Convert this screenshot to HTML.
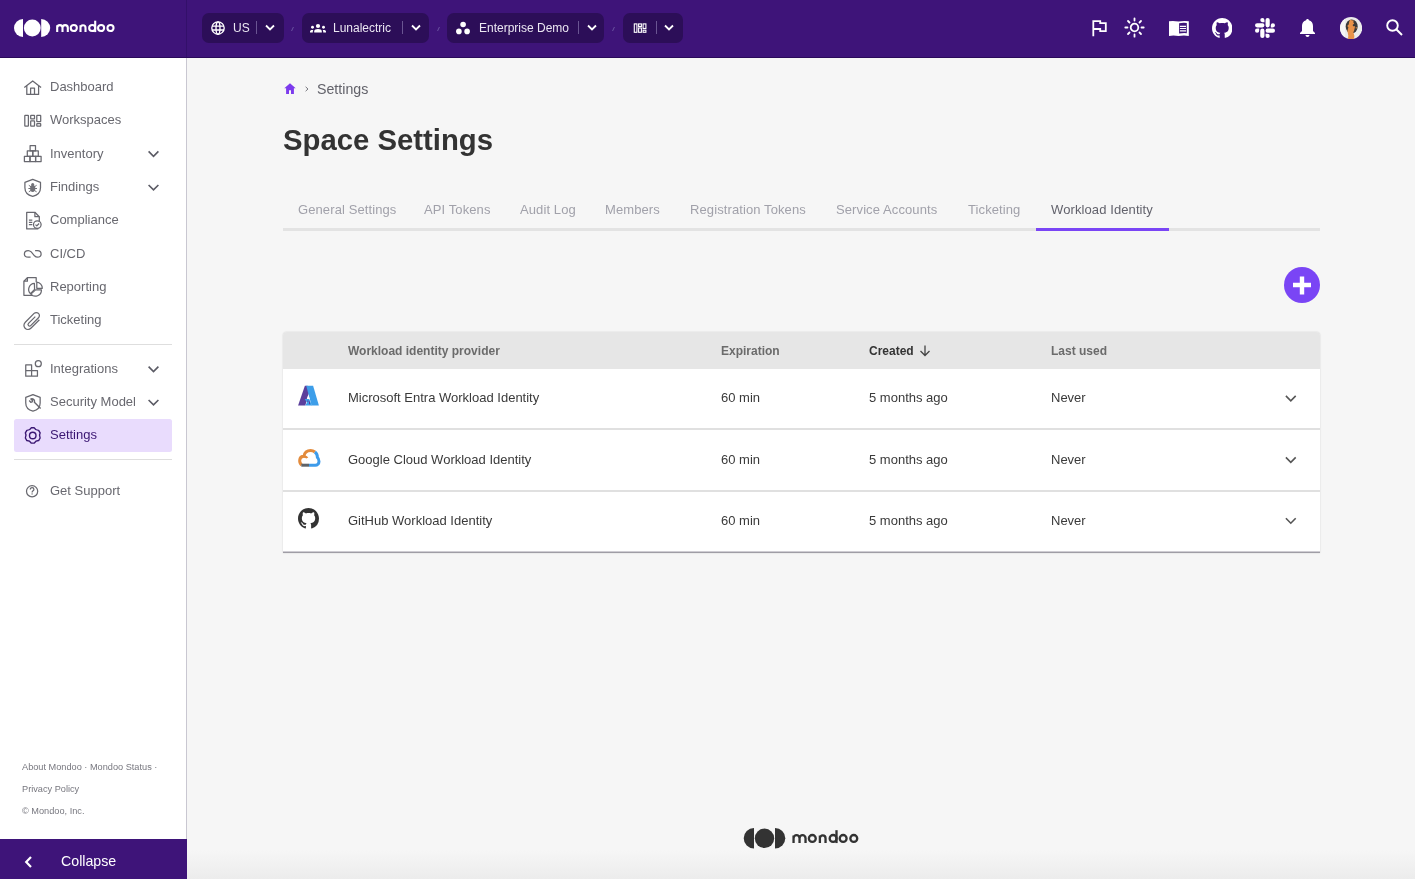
<!DOCTYPE html>
<html><head><meta charset="utf-8">
<style>
*{box-sizing:border-box;margin:0;padding:0}
html,body{width:1415px;height:879px;overflow:hidden;background:#f6f6f6;font-family:"Liberation Sans",sans-serif;-webkit-font-smoothing:antialiased}
.t,.si,.pt,.tab,.th,.td{will-change:transform}
.a{position:absolute}
.t{position:absolute;white-space:nowrap;line-height:1}
#top{position:absolute;left:0;top:0;width:1415px;height:58px;background:#3e1479;border-bottom:1px solid #2a0a5a}
.pill{position:absolute;top:13px;height:30px;background:#2c0e58;border-radius:7px}
.pt{position:absolute;top:21.8px;font-size:12px;color:#ebe7f2;line-height:1;white-space:nowrap}
.pdiv{position:absolute;top:21px;width:1px;height:13px;background:#6a5592}
.sep{position:absolute;top:26.5px;width:1px;height:4px;background:#6a52a0;transform:skewX(-25deg)}
#side{position:absolute;left:0;top:58px;width:187px;height:821px;background:#fff;border-right:1px solid #c9c7d1}
.si{position:absolute;left:50px;font-size:13px;color:#68686f;line-height:1;white-space:nowrap}
.ico{position:absolute;left:22px;width:20px;height:20px}
.chev{position:absolute;left:147px;width:12px;height:8px}
.hr{position:absolute;left:14px;width:158px;height:1px;background:#dcdcdc}
.tab{position:absolute;top:203px;font-size:13px;color:#a1a1aa;line-height:1;white-space:nowrap;letter-spacing:0.1px}
.th{position:absolute;top:345px;font-size:12px;font-weight:bold;color:#6b6b6b;line-height:1;white-space:nowrap}
.td{position:absolute;font-size:13px;color:#3a3a3a;line-height:1;white-space:nowrap}
</style></head><body>

<!-- TOP BAR -->
<div id="top">
  <!-- logo -->
  <svg class="a" style="left:12px;top:17px" width="40" height="22" viewBox="0 0 40 22">
    <path d="M11 2 A9 9 0 0 0 11 20 Z" fill="#fff"/>
    <circle cx="20.3" cy="11" r="8.4" fill="#fff"/>
    <path d="M29.2 2 A9 9 0 0 1 29.2 20 Z" fill="#fff"/>
  </svg>
  <svg class="a" style="left:0;top:0" width="187" height="57" viewBox="0 0 187 57"><g transform="translate(56 23.9)" fill="none" stroke="#fff" stroke-width="2.1"><path d="M1.2 8.2V3.9a2.65 2.65 0 0 1 5.3 0V8.2M6.5 3.9a2.65 2.65 0 0 1 5.3 0V8.2M1.2 8.2V1.4M24.5 8.2V1.4M24.5 3.9a2.5 2.5 0 0 1 5 0V8.2"/><circle cx="17.8" cy="4.1" r="3.05"/><circle cx="36.2" cy="4.1" r="3.05"/><path d="M39.2 -3.2V8.2"/><circle cx="45.1" cy="4.1" r="3.05"/><circle cx="54.5" cy="4.1" r="3.05"/></g></svg>
  <div class="a" style="left:186px;top:0;width:1px;height:57px;background:#33106a"></div>

  <div class="pill" style="left:202px;width:82px"></div>
  <svg class="a" style="left:211px;top:21px" width="14" height="14" viewBox="0 0 14 14"><g fill="none" stroke="#fff" stroke-width="1.35"><circle cx="7" cy="7" r="6.2"/><ellipse cx="7" cy="7" rx="2" ry="6.2"/><path d="M1 5.05h12M1 8.95h12"/></g></svg>
  <div class="pt" style="left:233px">US</div>
  <div class="pdiv" style="left:256px"></div>
  <svg class="a" style="left:265px;top:24px" width="10" height="8" viewBox="0 0 10 8"><path d="M1 1.5l4 4 4-4" fill="none" stroke="#fff" stroke-width="1.8"/></svg>
  <div class="sep" style="left:292px"></div>

  <div class="pill" style="left:302px;width:127px"></div>
  <svg class="a" style="left:309px;top:23px" width="18" height="10" viewBox="0 0 18 10"><g fill="#fff"><circle cx="9" cy="3" r="2.1"/><path d="M5.2 9.5V8c0-1.2 1.8-2 3.8-2s3.8.8 3.8 2v1.5z"/><circle cx="3.5" cy="4.2" r="1.45"/><path d="M1 9.5V8.5c0-1 1-1.5 2.2-1.5.4 0 .8.05 1.1.15-.3.4-.5.9-.5 1.4v.95z"/><circle cx="14.5" cy="4.2" r="1.45"/><path d="M17 9.5V8.5c0-1-1-1.5-2.2-1.5-.4 0-.8.05-1.1.15.3.4.5.9.5 1.4v.95z"/></g></svg>
  <div class="pt" style="left:333px">Lunalectric</div>
  <div class="pdiv" style="left:402px"></div>
  <svg class="a" style="left:411px;top:24px" width="10" height="8" viewBox="0 0 10 8"><path d="M1 1.5l4 4 4-4" fill="none" stroke="#fff" stroke-width="1.8"/></svg>
  <div class="sep" style="left:438px"></div>

  <div class="pill" style="left:447px;width:157px"></div>
  <svg class="a" style="left:455px;top:21px" width="15" height="14" viewBox="0 0 15 14"><g fill="#fff"><circle cx="8.1" cy="3.5" r="2.8"/><circle cx="3.9" cy="10.4" r="2.8"/><circle cx="12.1" cy="10.4" r="2.8"/></g></svg>
  <div class="pt" style="left:479px">Enterprise Demo</div>
  <div class="pdiv" style="left:578px"></div>
  <svg class="a" style="left:587px;top:24px" width="10" height="8" viewBox="0 0 10 8"><path d="M1 1.5l4 4 4-4" fill="none" stroke="#fff" stroke-width="1.8"/></svg>
  <div class="sep" style="left:613px"></div>

  <div class="pill" style="left:623px;width:60px"></div>
  <svg class="a" style="left:633px;top:23px" width="14" height="10" viewBox="0 0 14 10"><g fill="none" stroke="#fff" stroke-width="1.1"><rect x="1.3" y="0.9" width="2.6" height="8.4"/><rect x="5.6" y="0.9" width="2.8" height="2.6"/><rect x="5.6" y="5" width="2.8" height="4.3"/><rect x="10.1" y="0.9" width="2.8" height="4.6"/><rect x="10.1" y="7.2" width="2.8" height="2.1"/></g></svg>
  <div class="pdiv" style="left:656px"></div>
  <svg class="a" style="left:664px;top:24px" width="10" height="8" viewBox="0 0 10 8"><path d="M1 1.5l4 4 4-4" fill="none" stroke="#fff" stroke-width="1.8"/></svg>

  <!-- right icons -->
  <svg class="a" style="left:1091px;top:20px" width="16" height="17" viewBox="0 0 16 17"><path d="M2.3 16.2V1.1h6.9v2h5.6v8.1H9.2v-2.2H2.3" fill="none" stroke="#fff" stroke-width="1.8"/></svg>
  <svg class="a" style="left:1124px;top:17px" width="21" height="21" viewBox="0 0 21 21"><g stroke="#fff" stroke-width="1.8" fill="none" stroke-linecap="round"><circle cx="10.5" cy="10.5" r="3.8"/><path d="M10.5 1.3v2.2M10.5 17.5v2.2M1.3 10.5h2.2M17.5 10.5h2.2M4 4l1.5 1.5M15.5 15.5L17 17M4 17l1.5-1.5M15.5 5.5L17 4"/></g></svg>
  <svg class="a" style="left:1168px;top:20px" width="22" height="17" viewBox="0 0 22 17"><path d="M1 1.3Q5.5 0.6 10.6 1.6 15.5 0.6 20.8 1.3V16Q15.5 15.2 10.6 16.1 5.5 15.2 1 16Z" fill="#fff"/><path d="M11.1 3.2Q15 2.6 18.8 3V13.2Q15 12.9 11.1 13.5Z" fill="#3e1479"/><path d="M11.9 5.8h6.1v1.3h-6.1zM11.9 8h6.1v1.1h-6.1zM11.9 10.2h6.1v1.4h-6.1z" fill="#fff"/></svg>
  <svg class="a" style="left:1211.6px;top:17.8px" width="20.4" height="20.4" viewBox="0 0 16 16"><path fill="#fff" d="M8 0C3.58 0 0 3.58 0 8c0 3.54 2.29 6.53 5.47 7.59.4.07.55-.17.55-.38 0-.19-.01-.82-.01-1.49-2.01.37-2.53-.49-2.69-.94-.09-.23-.48-.94-.82-1.13-.28-.15-.68-.52-.01-.53.63-.01 1.08.58 1.23.82.72 1.21 1.87.87 2.33.66.07-.52.28-.87.51-1.07-1.78-.2-3.64-.89-3.640-3.95 0-.87.31-1.59.82-2.15-.08-.2-.36-1.02.08-2.12 0 0 .67-.21 2.2.82.64-.18 1.32-.27 2-.27.68 0 1.36.09 2 .27 1.53-1.04 2.2-.82 2.2-.82.44 1.1.16 1.92.08 2.12.51.56.82 1.270.82 2.15 0 3.07-1.87 3.75-3.65 3.95.29.25.54.73.54 1.48 0 1.07-.01 1.93-.01 2.2 0 .21.15.46.55.38A8.013 8.013 0 0016 8c0-4.42-3.58-8-8-8z"/></svg>
  <svg class="a" style="left:1255px;top:18px" width="20" height="20" viewBox="0 0 24 24"><path fill="#fff" d="M5.042 15.165a2.528 2.528 0 0 1-2.52 2.523A2.528 2.528 0 0 1 0 15.165a2.527 2.527 0 0 1 2.522-2.52h2.52v2.52zM6.313 15.165a2.527 2.527 0 0 1 2.521-2.52 2.527 2.527 0 0 1 2.521 2.52v6.313A2.528 2.528 0 0 1 8.834 24a2.528 2.528 0 0 1-2.521-2.522v-6.313zM8.834 5.042a2.528 2.528 0 0 1-2.521-2.52A2.528 2.528 0 0 1 8.834 0a2.528 2.528 0 0 1 2.521 2.522v2.52H8.834zM8.834 6.313a2.528 2.528 0 0 1 2.521 2.521 2.528 2.528 0 0 1-2.521 2.521H2.522A2.528 2.528 0 0 1 0 8.834a2.528 2.528 0 0 1 2.522-2.521h6.312zM18.956 8.834a2.528 2.528 0 0 1 2.522-2.521A2.528 2.528 0 0 1 24 8.834a2.528 2.528 0 0 1-2.522 2.521h-2.522V8.834zM17.688 8.834a2.528 2.528 0 0 1-2.523 2.521 2.527 2.527 0 0 1-2.52-2.521V2.522A2.527 2.527 0 0 1 15.165 0a2.528 2.528 0 0 1 2.523 2.522v6.312zM15.165 18.956a2.528 2.528 0 0 1 2.523 2.522A2.528 2.528 0 0 1 15.165 24a2.527 2.527 0 0 1-2.52-2.522v-2.522h2.52zM15.165 17.688a2.527 2.527 0 0 1-2.52-2.523 2.526 2.526 0 0 1 2.52-2.52h6.313A2.527 2.527 0 0 1 24 15.165a2.528 2.528 0 0 1-2.522 2.523h-6.313z"/></svg>
  <svg class="a" style="left:1299px;top:18px" width="17" height="19" viewBox="0 0 17 19"><path d="M8.5 1c-.8 0-1.4.6-1.4 1.3C4.5 3 3 5.2 3 8v5l-2 2v1h15v-1l-2-2V8c0-2.8-1.5-5-4.1-5.7C9.9 1.6 9.3 1 8.5 1zM6.5 17c0 1.1.9 2 2 2s2-.9 2-2z" fill="#fff"/></svg>
  <svg class="a" style="left:1340px;top:16.8px" width="22.2" height="22.2" viewBox="0 0 22.2 22.2"><defs><clipPath id="av"><circle cx="11.1" cy="11.1" r="11.1"/></clipPath></defs><g clip-path="url(#av)"><rect width="23" height="23" fill="#ececec"/><rect x="0" y="0" width="5" height="23" fill="#f6f6f6"/><ellipse cx="11.7" cy="9.5" rx="6" ry="7" fill="#3a3a3a"/><path d="M9.5 3.5l1.2-.9 1.3 1 1.6-.4-.2 2.2.8 1-1.6 1.5.7 1.4h1.8l-.8 3.6-.9 2.4 1 3.6-.6 4.5H7.8l.5-5-.9-4.3 1-3.8-1.2-1.3 1.5-1.4z" fill="#e8924a"/><path d="M15.5 10.5l1.5-.6-.8 2z" fill="#e8924a"/></g></svg>
  <svg class="a" style="left:1386px;top:19px" width="17" height="17" viewBox="0 0 17 17"><g fill="none" stroke="#fff" stroke-width="1.9"><circle cx="6.5" cy="6.5" r="5.3"/><path d="M10.5 10.5l5.5 5.5"/></g></svg>
</div>

<!-- SIDEBAR -->
<div id="side"></div>

<svg class="a" style="left:0;top:0" width="187" height="879" viewBox="0 0 187 879">
<g fill="none" stroke="#68686f" stroke-width="1.25" stroke-linejoin="round">
  <!-- dashboard -->
  <path d="M24.3 87.6L32.7 81l8.4 6.6"/>
  <path d="M26.8 85.7v8.7h11.8v-8.7"/>
  <path d="M30.6 94.4v-6.3h3.9v6.3"/>
  <!-- workspaces -->
  <rect x="24.8" y="115.3" width="3.6" height="10.8" rx="0.4"/>
  <rect x="30.7" y="115.3" width="3.8" height="3.6" rx="0.4"/>
  <rect x="30.7" y="120.8" width="3.8" height="5.3" rx="0.4"/>
  <rect x="36.8" y="115.3" width="3.9" height="6.4" rx="0.4"/>
  <rect x="36.8" y="123.5" width="3.9" height="2.6" rx="0.4"/>
  <!-- inventory -->
  <rect x="30.1" y="145.6" width="5.4" height="5.3"/>
  <rect x="27.3" y="150.9" width="5.5" height="5.4"/>
  <rect x="32.8" y="150.9" width="5.5" height="5.4"/>
  <rect x="24.4" y="156.3" width="5.6" height="5.3"/>
  <rect x="30" y="156.3" width="5.6" height="5.3"/>
  <rect x="35.6" y="156.3" width="5.5" height="5.3"/>
  <!-- findings shield -->
  <path d="M32.7 179.3l7.8 3.1v5.3c0 4.2-3.2 7.5-7.8 8.6-4.6-1.1-7.8-4.4-7.8-8.6v-5.3z"/>
  <!-- compliance doc -->
  <path d="M38.3 228.9h-11.6v-16.6h8.2l4.4 4.4v4.5"/>
  <path d="M34.9 212.3v4.4h4.4"/>
  <path d="M28.9 220.2h3.4M28.9 222.4h3.4M28.9 224.6h3.4"/>
  <circle cx="37.3" cy="224.6" r="3.8"/>
  <path d="M35.5 224.6l1.3 1.3 2.3-2.4"/>
  <!-- cicd infinity -->
  <path d="M30.6 257.2H28.2C25.8 257.2 24.4 255.7 24.4 253.9 24.4 252.1 25.8 250.5 28.2 250.5 29.5 250.5 30.4 251.1 31.2 251.9L34.5 255.8C35.3 256.6 36.2 257.2 37.5 257.2 39.7 257.2 41.1 255.7 41.1 253.9 41.1 252.1 39.7 250.5 37.5 250.5H35.1"/>
  <!-- reporting -->
  <path d="M32.5 295.3H23.9V281.2L27.4 277.7H36.2V282.3"/>
  <path d="M23.9 281.2H27.4V277.7"/>
  <path d="M34.4 283.4A6 6 0 0 0 30.4 293.6L34.6 289.4Z"/>
  <path d="M30.9 294.1A6 6 0 0 0 41.4 289.9H35.6Z"/>
  <path d="M36.8 282.2V288.3H42.3A6 6 0 0 0 36.8 282.2Z"/>
  <!-- ticketing paperclip -->
  <path d="M39.4 319.8l-8.3 8.2c-1.8 1.8-4.4 1.8-6 .2-1.6-1.6-1.6-4.2.2-6l8.8-8.8c1.2-1.2 3.2-1.2 4.4 0 1.2 1.2 1.2 3.2 0 4.4l-7.8 7.8c-.6.6-1.6.6-2.2 0-.6-.6-.6-1.6 0-2.2l6.8-6.8"/>
  <!-- integrations -->
  <path d="M25.75 376.15V364.85h5.85v5.7h5.85v5.6z M25.75 370.55h5.85v5.6"/>
  <circle cx="38.3" cy="363.7" r="3"/>
  <!-- security model shield -->
  <path d="M32.95 394.55l7.2 2.8v5.6c0 3.9-3 7.1-7.2 8.1-4.2-1-7.2-4.2-7.2-8.1v-5.6z"/>
  <!-- get support -->
  <circle cx="32.1" cy="491.3" r="5.6"/>
  <path d="M30.3 489.6c0-1.1.8-1.9 1.8-1.9s1.8.8 1.8 1.8c0 1.3-1.8 1.4-1.8 2.9"/>
</g>
<!-- bug in findings -->
<g fill="#707076">
  <ellipse cx="32.7" cy="188.5" rx="2.6" ry="3.4"/>
  <circle cx="32.7" cy="184.6" r="1.5"/>
  <path d="M28.8 185.3l2.3 1.6M36.6 185.3l-2.3 1.6M28.4 188.5h2.5M37 188.5h-2.5M28.8 191.8l2.3-1.4M36.6 191.8l-2.3-1.4" stroke="#707076" stroke-width="1"/>
</g>
<circle cx="32.1" cy="493.9" r="0.7" fill="#68686f"/>
<!-- wrench in security model -->
<path d="M29.2 400.6l1.6 1.6 1.4-.3.3-1.4-1.6-1.6c1.3-.4 2.6 0 3.2 1 .5.8.6 1.6.3 2.4l6.2 6.1" fill="none" stroke="#68686f" stroke-width="1.4" stroke-linejoin="round"/>
<!-- chevrons -->
<g fill="none" stroke="#5a5a64" stroke-width="1.6">
  <path d="M148.6 151.4l4.9 4.9 4.9-4.9"/>
  <path d="M148.6 185l4.9 4.9 4.9-4.9"/>
  <path d="M148.6 366.6l4.9 4.9 4.9-4.9"/>
  <path d="M148.6 400l4.9 4.9 4.9-4.9"/>
</g>
<!-- settings highlight -->
<rect x="14" y="419" width="158" height="33" rx="2.5" fill="#e9dcfd"/>
<!-- gear -->
<g fill="none" stroke="#3b1773" stroke-width="1.4" stroke-linejoin="round">
  <path d="M31.26 427.79L34.24 427.79Q35.70 430.34 38.64 430.33L40.13 432.91Q38.65 435.45 40.13 437.99L38.64 440.57Q35.70 440.56 34.24 443.11L31.26 443.11Q29.80 440.56 26.86 440.57L25.37 437.99Q26.85 435.45 25.37 432.91L26.86 430.33Q29.80 430.34 31.26 427.79Z"/>
  <circle cx="32.75" cy="435.45" r="3.25"/>
</g>
<!-- dividers -->
<rect x="14" y="344" width="158" height="1" fill="#dedede"/>
<rect x="14" y="459" width="158" height="1" fill="#dedede"/>
</svg>
<div class="si" style="top:79.9px">Dashboard</div>
<div class="si" style="top:112.6px">Workspaces</div>
<div class="si" style="top:147px">Inventory</div>
<div class="si" style="top:180px">Findings</div>
<div class="si" style="top:213.3px">Compliance</div>
<div class="si" style="top:247px">CI/CD</div>
<div class="si" style="top:280.4px">Reporting</div>
<div class="si" style="top:313px">Ticketing</div>
<div class="si" style="top:361.8px">Integrations</div>
<div class="si" style="top:395.2px">Security Model</div>
<div class="si" style="top:428px;color:#3b1773">Settings</div>
<div class="si" style="top:484.2px">Get Support</div>
<div class="t" style="left:22px;top:762.6px;font-size:9.2px;color:#77777f;line-height:1">About Mondoo · Mondoo Status ·</div>
<div class="t" style="left:22px;top:784.6px;font-size:9.2px;color:#77777f">Privacy Policy</div>
<div class="t" style="left:22px;top:807px;font-size:9.2px;color:#77777f">© Mondoo, Inc.</div>
<div class="a" style="left:0;top:839px;width:187px;height:40px;background:#3e1479"></div>
<svg class="a" style="left:23px;top:855px" width="11" height="14" viewBox="0 0 11 14"><path d="M8 2L3.2 7 8 12" fill="none" stroke="#fff" stroke-width="2.2"/></svg>
<div class="t" style="left:61px;top:854.3px;font-size:14.2px;color:#fff">Collapse</div>


<!-- MAIN -->

<!-- breadcrumb -->
<svg class="a" style="left:284px;top:83px" width="12" height="11" viewBox="0 0 12 11"><path d="M6 0.3L0.3 5.3h1.8V11h2.9V7.3h2V11h2.9V5.3h1.8z" fill="#7c3aed"/></svg>
<svg class="a" style="left:304px;top:85px" width="6" height="8" viewBox="0 0 6 8"><path d="M1.6 1.8l2.4 2.2-2.4 2.2" fill="none" stroke="#6b6b73" stroke-width="0.9"/></svg>
<div class="t" style="left:317px;top:81.6px;font-size:14.2px;color:#62626a">Settings</div>
<div class="t" style="left:283px;top:125px;font-size:29.3px;font-weight:bold;color:#333">Space Settings</div>
<!-- tabs -->
<div class="a" style="left:283px;top:228px;width:1037px;height:3px;background:#e3e3e3"></div>
<div class="a" style="left:1036px;top:228px;width:133px;height:3px;background:#7a45f5"></div>
<div class="tab" style="left:297.8px">General Settings</div>
<div class="tab" style="left:424px">API Tokens</div>
<div class="tab" style="left:519.7px">Audit Log</div>
<div class="tab" style="left:605.2px">Members</div>
<div class="tab" style="left:689.8px">Registration Tokens</div>
<div class="tab" style="left:836px">Service Accounts</div>
<div class="tab" style="left:968px">Ticketing</div>
<div class="tab" style="left:1050.8px;color:#62626c">Workload Identity</div>
<!-- add button -->
<svg class="a" style="left:1284px;top:266.8px" width="36" height="36" viewBox="0 0 36 36"><circle cx="18" cy="18" r="18" fill="#7a45f5"/><path d="M18 9.5v18M9 18h18" stroke="#fff" stroke-width="4.4"/></svg>
<!-- table -->
<div class="a" style="left:283px;top:332px;width:1037px;height:221px;border-radius:4px 4px 0 0;background:#fff;box-shadow:0 0 1.5px rgba(0,0,0,0.22);overflow:hidden">
  <div class="a" style="left:0;top:0;width:1037px;height:37px;background:#e6e6e6"></div>
  <div class="a" style="left:0;top:96px;width:1037px;height:2px;background:#e0e0e0"></div>
  <div class="a" style="left:0;top:158px;width:1037px;height:2px;background:#e0e0e0"></div>
  <div class="a" style="left:0;top:219px;width:1037px;height:1px;background:#cfcdd3"></div><div class="a" style="left:0;top:220px;width:1037px;height:1px;background:#9f9da5"></div>
</div>
<div class="th" style="left:348px">Workload identity provider</div>
<div class="th" style="left:721px">Expiration</div>
<div class="th" style="left:868.5px;color:#333">Created</div>
<svg class="a" style="left:919px;top:345px" width="12" height="12" viewBox="0 0 12 12"><path d="M6 0.5v10M1.5 6l4.5 4.5L10.5 6" fill="none" stroke="#444" stroke-width="1.3"/></svg>
<div class="th" style="left:1050.5px">Last used</div>

<!-- row icons -->
<svg class="a" style="left:294px;top:380px" width="30" height="30" viewBox="0 0 30 30"><path d="M10.9 5.8H13.6L15 12.8 11.3 25.6H4.1Z" fill="#5b3f9c"/><path d="M12.2 5.8H19.1L24.9 25.6H17.6Z" fill="#3d9ee9"/><path d="M14.3 14.6L12.7 19.2H15.7Z" fill="#fff"/><path d="M10.6 19H15.2L18 25.6H12.3L11.3 25.6 13 22.5Z" fill="#3d9ee9"/><path d="M13.2 20.5h1.3v1.3h-1.3zM15 21.5h1v2.8h-1z" fill="#5b3f9c"/></svg>
<svg class="a" style="left:294px;top:444px" width="30" height="30" viewBox="294 444 30 30"><g fill="none" stroke-width="3"><path d="M301.6 465C300 463.8 299.6 462 299.7 460.2 299.9 457.8 301.8 456.3 304 456.3 304.3 452.6 307.1 450.4 310.6 450.4 312.3 450.4 313.7 451 314.9 452" stroke="#e38b3c"/><path d="M303.8 456.4C305.6 456.6 307 457.5 307.3 458" stroke="#e38b3c" stroke-width="2.4"/><path d="M314.9 452C316.6 453.3 317.4 455.3 317.4 457.3 318.6 458.3 319 459.9 319 461.5 319 463.6 317.4 465.2 315.3 465.2H309" stroke="#3d9bea"/><path d="M309 465.2H301.3" stroke="#5f6368"/></g></svg>
<svg class="a" style="left:298px;top:508px" width="21" height="21" viewBox="0 0 16 16"><path fill="#333" d="M8 0C3.58 0 0 3.58 0 8c0 3.54 2.29 6.53 5.47 7.59.4.07.55-.17.55-.38 0-.19-.01-.82-.01-1.49-2.01.37-2.53-.49-2.690-.94-.09-.23-.48-.94-.82-1.13-.28-.15-.68-.52-.01-.53.63-.01 1.08.58 1.23.82.72 1.21 1.87.87 2.33.66.07-.52.28-.87.51-1.07-1.78-.2-3.64-.89-3.64-3.95 0-.87.31-1.59.82-2.15-.08-.2-.36-1.02.08-2.12 0 0 .67-.21 2.2.82.64-.18 1.32-.27 2-.27.68 0 1.36.09 2 .27 1.53-1.04 2.2-.82 2.2-.82.44 1.1.16 1.92.08 2.12.51.56.82 1.27.82 2.15 0 3.07-1.87 3.75-3.65 3.95.29.25.54.73.54 1.48 0 1.07-.01 1.93-.01 2.2 0 .21.15.46.55.38A8.013 8.013 0 0016 8c0-4.42-3.58-8-8-8z"/></svg>

<div class="td" style="left:348px;top:391px">Microsoft Entra Workload Identity</div>
<div class="td" style="left:721px;top:391px">60 min</div>
<div class="td" style="left:868.5px;top:391px">5 months ago</div>
<div class="td" style="left:1050.5px;top:391px">Never</div>
<div class="td" style="left:348px;top:453px">Google Cloud Workload Identity</div>
<div class="td" style="left:721px;top:453px">60 min</div>
<div class="td" style="left:868.5px;top:453px">5 months ago</div>
<div class="td" style="left:1050.5px;top:453px">Never</div>
<div class="td" style="left:348px;top:514px">GitHub Workload Identity</div>
<div class="td" style="left:721px;top:514px">60 min</div>
<div class="td" style="left:868.5px;top:514px">5 months ago</div>
<div class="td" style="left:1050.5px;top:514px">Never</div>
<svg class="a" style="left:0;top:0" width="1415" height="879" viewBox="0 0 1415 879"><g fill="none" stroke="#555" stroke-width="1.6"><path d="M1285.9 395.9l4.9 4.9 4.9-4.9"/><path d="M1285.9 457.4l4.9 4.9 4.9-4.9"/><path d="M1285.9 518.3l4.9 4.9 4.9-4.9"/></g></svg>

<div class="a" style="left:187px;top:850px;width:1228px;height:29px;background:linear-gradient(#f6f6f6,#ececec)"></div>
<!-- footer logo -->
<svg class="a" style="left:742px;top:826px" width="46" height="24" viewBox="0 0 46 24"><path d="M12 2A10.2 10.2 0 0 0 12 22.6Z" fill="#333"/><circle cx="22.5" cy="12.3" r="9.7" fill="#333"/><path d="M33 2A10.2 10.2 0 0 1 33 22.6Z" fill="#333"/></svg>
<svg class="a" style="left:780px;top:820px" width="100" height="40" viewBox="780 820 100 40"><g transform="translate(792.2 833.8) scale(1.13)" fill="none" stroke="#333" stroke-width="2.05"><path d="M1.2 8.2V3.9a2.65 2.65 0 0 1 5.3 0V8.2M6.5 3.9a2.65 2.65 0 0 1 5.3 0V8.2M1.2 8.2V1.4M24.5 8.2V1.4M24.5 3.9a2.5 2.5 0 0 1 5 0V8.2"/><circle cx="17.8" cy="4.1" r="3.05"/><circle cx="36.2" cy="4.1" r="3.05"/><path d="M39.2 -3.2V8.2"/><circle cx="45.1" cy="4.1" r="3.05"/><circle cx="54.5" cy="4.1" r="3.05"/></g></svg>


</body></html>
